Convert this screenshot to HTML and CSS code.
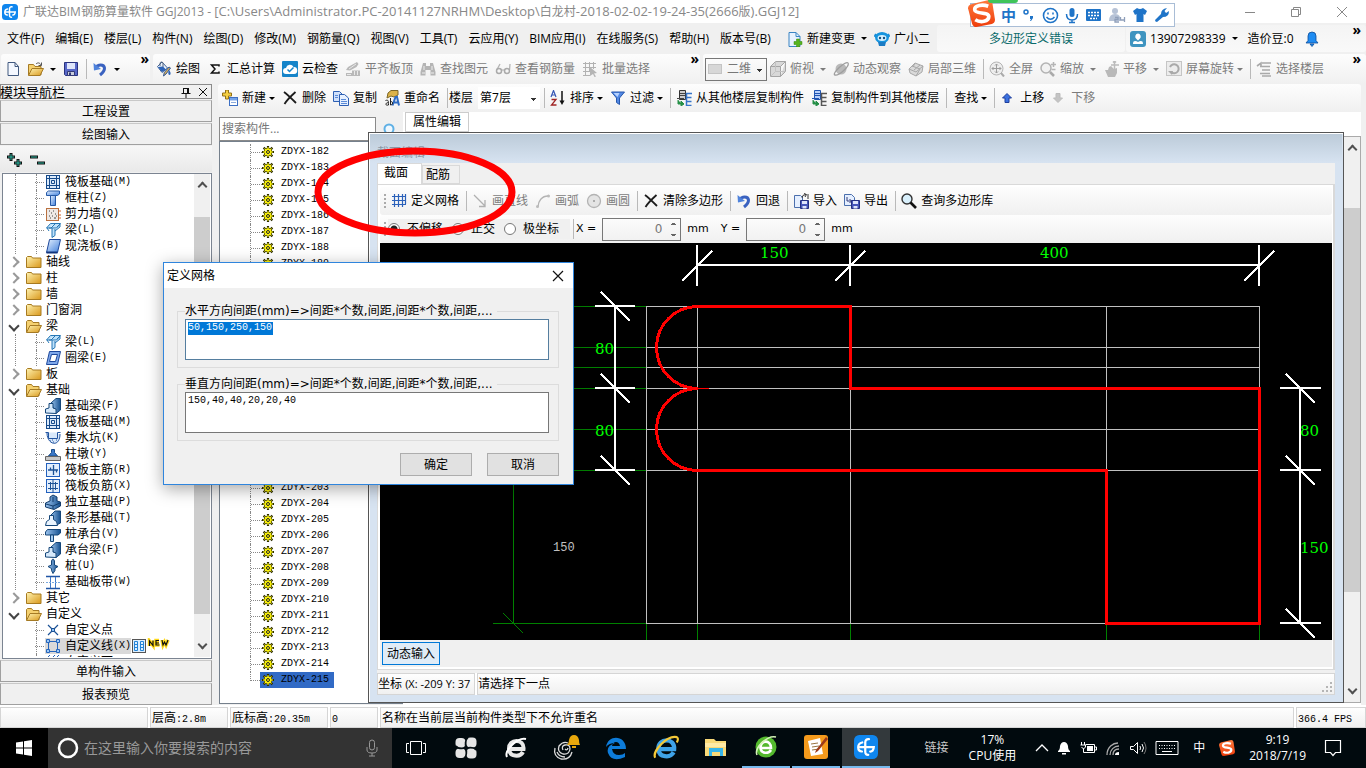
FILE: index.html
```html
<!DOCTYPE html>
<html lang="zh-CN">
<head>
<meta charset="utf-8">
<title>广联达BIM钢筋算量软件 GGJ2013</title>
<link rel="stylesheet" href="styles.css">
</head>
<body>
<svg class="defs" aria-hidden="true">
  <defs>
    <linearGradient id="gold" x1="0" y1="0" x2="1" y2="1"><stop offset="0" stop-color="#fff3b0"/><stop offset="1" stop-color="#d9981c"/></linearGradient>
    <linearGradient id="blue" x1="0" y1="0" x2="1" y2="1"><stop offset="0" stop-color="#e6f1ff"/><stop offset="1" stop-color="#3f7fdb"/></linearGradient>
    <linearGradient id="steel" x1="0" y1="0" x2="1" y2="0"><stop offset="0" stop-color="#9cc4ee"/><stop offset="1" stop-color="#15508f"/></linearGradient>
    <linearGradient id="sogou" x1="0" y1="0" x2="0" y2="1"><stop offset="0" stop-color="#ff7a3c"/><stop offset="1" stop-color="#ee3d0c"/></linearGradient>
  </defs>
  <symbol id="app" viewBox="0 0 16 16"><rect width="16" height="16" rx="3.500" fill="#0f86ee"/><path d="M10 2.800Q7.500 2.500 7.500 5v6.200Q7.500 13.300 9.500 13.200M4 8h9.200Q13 11 10.800 11M5.500 5Q2.800 5.500 2.800 8.200T5.300 11" fill="none" stroke="#fff" stroke-width="1.500" stroke-linecap="round"/></symbol>
  <symbol id="doc" viewBox="0 0 16 16"><path d="M3 1.500h7l3.500 4v9H3z" fill="#f4f8ff" stroke="#41597f"/><path d="M10 1.500v4h3.500" fill="none" stroke="#41597f"/></symbol>
  <symbol id="open" viewBox="0 0 16 16"><path d="M.500 14V3.500h5l1.500 2h6V14z" fill="#f5d170" stroke="#a57a24"/><path d="M.500 14.500 4 7.500h11.500L12 14.500z" fill="url(#gold)" stroke="#a57a24"/><path d="M8 3c2-2 4-1 5 1M13.500 1.500v3h-3" stroke="#555" fill="none"/></symbol>
  <symbol id="opened" viewBox="0 0 16 16"><path d="M.500 14V3.500l1-1h4l1.500 2h6V14z" fill="#f5d170" stroke="#a57a24"/><path d="M.500 14.500 4 7.500h11.500L12 14.500z" fill="url(#gold)" stroke="#a57a24"/></symbol>
  <symbol id="save" viewBox="0 0 16 16"><path d="M1.500 1.500h13v13h-12l-1-1z" fill="#5868c8" stroke="#29327e"/><path d="M4 2h8v6H4z" fill="#dfe6fa"/><path d="M4.500 10.500h7v4h-7z" fill="#c9cddb" stroke="#333a78"/><path d="M6 11.500h2v3H6z" fill="#333a78"/></symbol>
  <symbol id="undo" viewBox="0 0 16 16"><path d="M3 7c3-4 9-4 9.500 0 .200 3-2 5-4.500 7" fill="none" stroke="#3a62c0" stroke-width="3"/><path d="M1.500 2l.500 7.500L9 8z" fill="#4f83dc"/></symbol>
  <symbol id="paint" viewBox="0 0 16 16"><path d="M1.500 5.500 6 1l5.500 6L6 11.500z" fill="#e9f1fc" stroke="#3c5f95"/><path d="M2 6l5-.500 3 3-4 2.500z" fill="#2c63b8"/><path d="M4 5V2.500a1.500 1.500 0 0 1 3 0V6" fill="none" stroke="#53647d"/><path d="M14.500 7 10 13l-2.500 2 .800-3.500L13 6z" fill="#d8ad55" stroke="#315795"/><path d="M13 9c2 2 2 5 .500 5s-1.500-3-.500-5z" fill="#2c63b8"/></symbol>
  <symbol id="sigma" viewBox="0 0 16 16"><path d="M12 5.500V4H4.500L8 8l-3.500 4H12v-1.500" fill="none" stroke="#111" stroke-width="1.500"/></symbol>
  <symbol id="cloud" viewBox="0 0 16 16"><rect width="16" height="16" rx="1" fill="#1584c9"/><path d="M4 13a3 3 0 0 1 0-6 4 4 0 0 1 7.500-1A3.500 3.500 0 0 1 12 13z" fill="#fff"/><path d="m5.500 8.500 2 2 4-4" fill="none" stroke="#1584c9" stroke-width="1.500"/></symbol>
  <symbol id="align" viewBox="0 0 16 16"><path d="m1 9 2-3 9-5 1.500 2-2 3L5 9.500zM7 9.500h8V15H1v-3h6z" fill="#b9b9b9"/><path d="M9.500 10v4M12.500 10v4M2 13.500h4M4 8l7-5" stroke="#e9e9e9"/></symbol>
  <symbol id="binoc" viewBox="0 0 16 16"><path d="M3 2h3v3h4V2h3l2.500 9v3.500h-5V9h-5v5.500h-5V11z" fill="#b5b5b5"/><path d="M2 12h3M11 12h3M4 5v4M12 5v4" stroke="#eee"/></symbol>
  <symbol id="glasses" viewBox="0 0 16 16"><path d="M5 3 2 8.500M15 3l-.500 6" stroke="#b4b4b4" stroke-width="1.300" fill="none"/><circle cx="4" cy="10" r="2.500" fill="none" stroke="#aaa" stroke-width="1.500"/><circle cx="12" cy="10" r="2.500" fill="none" stroke="#aaa" stroke-width="1.500"/><path d="M6.500 9h3" stroke="#aaa"/></symbol>
  <symbol id="batch" viewBox="0 0 16 16"><path d="M1 2.500h13M1 6.500h13M1 10.500h6M1 14.500h7M3.500 1v14M7.500 1v10M11.500 1v7" stroke="#b2b2b2"/><path d="m8 6 7 6-3 .500 2 3-1.500.500-1.500-3-3 2z" fill="#b5b5b5"/></symbol>
  <symbol id="panel" viewBox="0 0 16 16"><rect x="1.500" y="3.500" width="13" height="9" fill="#d7d7d7" stroke="#c4c4c4"/></symbol>
  <symbol id="cube" viewBox="0 0 16 16"><path d="M.500 5.500h10v10h-10zM.500 5.500l5-5h10l-5 5M10.500 15.500l5-5V.500" fill="#d8d8d8" stroke="#a5a5a5"/><path d="M5.500.500v10h10M.500 15.500l5-5" fill="none" stroke="#c2c2c2"/></symbol>
  <symbol id="planet" viewBox="0 0 16 16"><circle cx="8" cy="8" r="5.500" fill="#bababa"/><path d="M2 14C-2 13 13-1 15 2s-9 13-13 12z" fill="none" stroke="#9e9e9e" stroke-width="1.300"/></symbol>
  <symbol id="part3d" viewBox="0 0 16 16"><path d="m1 8 6-6 8 3-1 6-6 4-6-3z" fill="#dadada" stroke="#a8a8a8"/><path d="m4 5 8 3-4 7M1 8l7 3 7-6M7 2l-2 4M12 4 6 9" fill="none" stroke="#a8a8a8"/></symbol>
  <symbol id="full" viewBox="0 0 16 16"><circle cx="7.500" cy="7.500" r="6.500" fill="#eee" stroke="#b5b5b5"/><path d="M7.500 3v9M3 7.500h9M6 4.500 7.500 3 9 4.500M6 10.500 7.500 12 9 10.500M4.500 6 3 7.500 4.500 9M10.500 6 12 7.500 10.500 9" fill="none" stroke="#9d9d9d"/><path d="m12 12 3 3.500" stroke="#aaa" stroke-width="2"/></symbol>
  <symbol id="zoomer" viewBox="0 0 16 16"><circle cx="6" cy="7" r="5" fill="#f2f2f2" stroke="#b3b3b3" stroke-width="1.500"/><path d="m10 11 4 4" stroke="#aaa" stroke-width="2.500"/><path d="M13.500 1v5M11 3.500h5M11.500 8.500h4" stroke="#b5b5b5" stroke-width="1.500"/></symbol>
  <symbol id="hand" viewBox="0 0 16 16"><path d="M2 9h3l1-3 2-1 3 3 3-1v5l-2 4H5z" fill="#b9b9b9"/><path d="M11.500 0v8M8 4h8M10 1.500 11.500 0 13 1.500" stroke="#bbb" stroke-width="1.500" fill="none"/></symbol>
  <symbol id="rotate" viewBox="0 0 16 16"><rect x=".500" y=".500" width="15" height="14" fill="#ececec" stroke="#c5c5c5"/><path d="M4 6a4.500 4.500 0 1 1 1 5" fill="none" stroke="#a9a9a9" stroke-width="2"/><path d="m2 10 5 0-1 4z" fill="#a9a9a9"/></symbol>
  <symbol id="floors" viewBox="0 0 16 16"><path d="M6 2h9M4 5.500h10M6 9h8M4 12.500h10M6 15h9M1 5l4-3v3" fill="none" stroke="#a9a9a9" stroke-width="1.600"/></symbol>
  <symbol id="newdoc" viewBox="0 0 16 16"><path d="M2 1.500h7l4 4v10H2z" fill="#e7f2ff" stroke="#3a84c3"/><path d="M9 1.500v4h4" fill="none" stroke="#3a84c3"/><path d="M9.500 8h3v2.500H15v3h-2.500V16h-3v-2.500H7v-3h2.500z" fill="#56b51f" stroke="#35870f" stroke-width=".500"/></symbol>
  <symbol id="robot" viewBox="0 0 16 16"><path d="M2 3 1 5l2 1M14 3l1 2-2 1" stroke="#188bd6" stroke-width="2"/><ellipse cx="8" cy="6.500" rx="7" ry="5.500" fill="#1694de"/><ellipse cx="8" cy="7" rx="4.500" ry="3" fill="#d8f2ff"/><circle cx="6" cy="7" r="1.200" fill="#17507f"/><circle cx="10" cy="7" r="1.200" fill="#17507f"/><path d="M4 11h8l-1 4H5z" fill="#1b7cc4"/></symbol>
  <symbol id="user" viewBox="0 0 16 16"><rect width="16" height="16" rx="3" fill="#3e94c0"/><path d="M8 2.500a3 3 0 0 1 2 5l-2 2-2-2a3 3 0 0 1 2-5zM3 13c0-4 3-3 5-2 2-1 5-2 5 2z" fill="#fff"/></symbol>
  <symbol id="bell" viewBox="0 0 16 16"><path d="M2 12 4 9.500V5a4 4 0 0 1 8 0v4.500l2 2.500zM6 13h4l-2 2.500z" fill="#1f8cf2" stroke="#0d4d99" stroke-width=".800"/></symbol>
  <symbol id="add" viewBox="0 0 16 16"><path d="M3.500 0h3v3h3v3h-3v3h-3V6h-3V3h3z" fill="#f4cf42" stroke="#927016"/><rect x="7.500" y="7.500" width="8" height="8" fill="#fff" stroke="#3c6fc3"/><path d="M8 8h7v2.500H8z" fill="#74a2e8"/><path d="M9 12.500h5" stroke="#8cabdc"/></symbol>
  <symbol id="cross" viewBox="0 0 16 16"><path d="M2 2c4 3 8 7 12 11M13.500 2C9 6 5 10 2.500 14" stroke="#1c1c1c" stroke-width="1.800" fill="none"/></symbol>
  <symbol id="copy" viewBox="0 0 16 16"><path d="M.500 1.500h6l3 3v7h-9z" fill="#cfe0fb" stroke="#2d5fb3"/><path d="M6.500 4.500h5l4 3.500v7.500h-9z" fill="#e6f0ff" stroke="#2d5fb3"/><path d="M8 9.500h5M8 11.500h6M8 13.500h6M2 5.500h3M2 7.500h3" stroke="#5b8bd8"/></symbol>
  <symbol id="rename" viewBox="0 0 16 16"><path d="m4 3 3-2.500h7V5l-4 2-3-1-4 2z" fill="#dcb34a" stroke="#7c6728"/><path d="m8.500 15.500 3-8.500h1.500l2 8.500M10 12.500h4.500" stroke="#2f6cc4" stroke-width="2" fill="none"/><path d="M1.500 10.500c3-1 3 .500 3 4.500-3 1-4-2 0-2.500M6.500 8v7c3 0 2.500-4 0-3.500" stroke="#222" fill="none"/></symbol>
  <symbol id="az" viewBox="0 0 16 16"><path d="m1 7 2.500-6.500L6 7M2 5h3" fill="none" stroke="#3656b4" stroke-width="1.200"/><path d="M1.500 9.500H6l-4.500 5.500H6.500" fill="none" stroke="#a02525" stroke-width="1.300"/><path d="M12 1v11" stroke="#111" stroke-width="1.500"/><path d="m9.500 10.500 5 0-2.500 4.500z" fill="#111"/></symbol>
  <symbol id="filter" viewBox="0 0 16 16"><path d="M1.500 2h13L9.500 8v6.500l-3-2V8z" fill="#5288e4" stroke="#2657ac"/><path d="M3.500 3h6L7.500 7z" fill="#b6d2ff"/></symbol>
  <symbol id="copyin" viewBox="0 0 16 16"><path d="M3.500.500h6v9h-6z" fill="#ccc" stroke="#333"/><path d="M4 3.500h5M4 5.500h5M1 8.500h7" stroke="#444"/><path d="M13.500 3.500h-3v12h5M10.500 7.500h5M10.500 11.500h5M13 3.500h3" stroke="#3675c9" stroke-width="1.500" fill="none"/><path d="M2 10v4h4M8 14l-3-3v5z" fill="#258f46" stroke="#258f46"/></symbol>
  <symbol id="copyout" viewBox="0 0 16 16"><path d="M3.500.500h6v9h-6z" fill="#b8d0fa" stroke="#2055b2"/><path d="M4 3.500h5M4 5.500h5M1 8.500h7" stroke="#2055b2"/><path d="M13.500 3.500h-3v12h5M10.500 7.500h5M10.500 11.500h5M13 3.500h3" stroke="#555" stroke-width="1.500" fill="none"/><path d="M2 10v4h4M8 14l-3-3v5z" fill="#258f46" stroke="#258f46"/></symbol>
  <symbol id="up" viewBox="0 0 16 16"><path d="m7 3.500 4.500 4.500H9v4.500H5V8H2.500z" fill="#3a70e0" stroke="#1f3f9c"/></symbol>
  <symbol id="down" viewBox="0 0 16 16"><path d="M7 12.500 2.500 8H5V3.500h4V8h2.500z" fill="#c4c4c4" stroke="#bbb"/></symbol>
  <symbol id="grid" viewBox="0 0 16 16"><path d="M3.500 1v13M7.500 1v13M11.500 1v13M14.500 1v10M1 3.500h14M1 7.500h14M1 11.500h14" stroke="#2b61ba" stroke-width="1.200"/></symbol>
  <symbol id="line" viewBox="0 0 16 16"><path d="m2 2 11 11M13 7v6.500H7" fill="none" stroke="#b0b0b0" stroke-width="1.300"/></symbol>
  <symbol id="arc" viewBox="0 0 16 16"><path d="M3 14C3 8 7 3 13 3" fill="none" stroke="#b3b3b3" stroke-width="1.300"/><circle cx="2.500" cy="13.500" r="1.500" fill="#bbb"/><circle cx="13.500" cy="3" r="1.500" fill="#bbb"/></symbol>
  <symbol id="circle" viewBox="0 0 16 16"><circle cx="8" cy="8" r="6.500" fill="#e4e4e4" stroke="#b3b3b3" stroke-width="1.300"/><path d="M8 7v2M7 8h2" stroke="#999"/></symbol>
  <symbol id="import" viewBox="0 0 16 16"><path d="M1.500 2.500h6l2 2v10h-8z" fill="#e5efff" stroke="#4b6fad"/><path d="M7.500 7.500h8v8h-8z" fill="#4656b8" stroke="#252f80"/><path d="M9 8h5v3H9zM9.500 13h4v2.500h-4z" fill="#dee4fb"/><path d="M9 5Q9 1.500 13 1.500M11 .500l2.500 1L12 4M15 1v5" stroke="#333" fill="none"/></symbol>
  <symbol id="export" viewBox="0 0 16 16"><path d="M.500 1.500h7l3 3v8h-10z" fill="#e5efff" stroke="#4b6fad"/><path d="M3 4v4h4M5.500 6 7.500 8l-2 2" stroke="#333a78" fill="none"/><path d="M7.500 7.500h8v8h-8z" fill="#4656b8" stroke="#252f80"/><path d="M9 8h5v3H9zM9.500 13h4v2.500h-4z" fill="#dee4fb"/></symbol>
  <symbol id="lens" viewBox="0 0 16 16"><circle cx="6" cy="6" r="5" fill="#d9f0fc" stroke="#333" stroke-width="1.400"/><path d="m9.500 9.500 5.500 5.500" stroke="#111" stroke-width="2.600"/></symbol>
  <symbol id="folder" viewBox="0 0 16 16"><path d="M.500 13.500v-10l1-1h4l1 1.500h8.500v9.500z" fill="url(#gold)" stroke="#a77a20"/></symbol>
  <symbol id="gear" viewBox="0 0 12 12"><path d="M6 0v12M0 6h12M1.600 1.600l8.800 8.800M10.400 1.600l-8.800 8.800" stroke="#2c2c00" stroke-width="2.200"/><circle cx="6" cy="6" r="4" fill="#f5e800" stroke="#55500a" stroke-width=".800"/><path d="M6 1v10M1 6h10M2.500 2.500l7 7M9.500 2.500l-7 7" stroke="#ffff20" stroke-width=".900"/><circle cx="6" cy="6" r="1.500" fill="#fff200" stroke="#222"/></symbol>
  <symbol id="raft" viewBox="0 0 16 16"><rect x="1.500" y="1.500" width="13" height="13" fill="#dcebfb" stroke="#164a8a"/><path d="M4.500 1v14M11.500 1v14M1 4.500h14M1 11.500h14M6.500 6.500h3v3h-3z" stroke="#164a8a" fill="none"/></symbol>
  <symbol id="column" viewBox="0 0 16 16"><path d="m1.500 2.500 2-1.500h11v3l-2 1.500h-11z" fill="url(#blue)" stroke="#2558a5"/><path d="M5.500 5.500h5v10h-5z" fill="url(#blue)" stroke="#2558a5"/></symbol>
  <symbol id="wall" viewBox="0 0 16 16"><rect x="1.500" y="2.500" width="12" height="12" fill="#efe9e5" stroke="#b9703f"/><path d="M4 5h1M8 5h1M6 7h1M10 8h1M4 10h1M7 10h1M5 12h1M9 12h2M11 10h1" stroke="#444"/><path d="M13 5h3M13 9h3M13 12h3" stroke="#d0642a"/></symbol>
  <symbol id="beam" viewBox="0 0 16 16"><path d="m1.500 6 4-4.500h10l-4 4.500zM4 6h2l4-4M7 6v9.500l3-2V7M2 6l2 3M12 5l3-3v3l-5 4" fill="#bfe2fb" stroke="#2677b5"/></symbol>
  <symbol id="slab" viewBox="0 0 16 16"><path d="M4.500 1.500h11l-3 13h-11z" fill="url(#blue)" stroke="#1c479b"/><path d="M1.500 14.500h11" stroke="#12357c" stroke-width="2"/></symbol>
  <symbol id="ring" viewBox="0 0 16 16"><path d="M4.500 1.500h11l-3 13h-11z" fill="#7fa8ea" stroke="#1c479b"/><path d="M6.500 4.500h6l-2 7h-6z" fill="#fff" stroke="#1c479b"/></symbol>
  <symbol id="fbeam" viewBox="0 0 16 16"><path d="M6 5 11 .500h4.500V12L11 15.500z" fill="url(#steel)" stroke="#154679"/><path d="M.500 15v-4L4 10V5.500h4V10l3 1v4.500z" fill="#d6e9fb" stroke="#154679"/></symbol>
  <symbol id="pit" viewBox="0 0 16 16"><path d="M.500 2.500h3v6h9v-6h3M2 3c0 12 13 15 13 1" fill="#d8e8fa" stroke="#2255a1"/><path d="M5 11h1M8 12h1M11 10h1M7 10h1" stroke="#2255a1"/></symbol>
  <symbol id="pier" viewBox="0 0 16 16"><path d="M6.500 3.500h3v3l3 3.500h-9l3-3.500z" fill="#3a78c8" stroke="#174a88"/><path d="M.500 10.500h15v4H.500z" fill="#c8c8c8" stroke="#666"/></symbol>
  <symbol id="rebar1" viewBox="0 0 16 16"><rect x="1.500" y="1.500" width="13" height="13" fill="#e3effd" stroke="#2260bd"/><path d="M8.500 3v10M3 8h10M5.500 5.500V8M11.500 8v2.500" stroke="#1c5295" stroke-width="1.300"/></symbol>
  <symbol id="rebar2" viewBox="0 0 16 16"><rect x="1.500" y="1.500" width="13" height="13" fill="#e3effd" stroke="#2260bd"/><path d="M8 1v14M3 5.500h10M3 10.500h10M5.500 4v8M10.500 4v8" stroke="#1c5295"/></symbol>
  <symbol id="footing" viewBox="0 0 16 16"><path d="M.500 9 5 7V3l3-2 4 2v4l3.500 1v4L9 15.500.500 13z" fill="url(#steel)" stroke="#143d6c"/><path d="m1 10 7 2 7-3M8 12v3M8 3v5" fill="none" stroke="#143d6c"/></symbol>
  <symbol id="strip" viewBox="0 0 16 16"><path d="m5 6 5-5h5.500v12l-4 2z" fill="url(#steel)" stroke="#154679"/><path d="m.500 15.500 1-4 3-2v-4h4v4l3 2 1 4z" fill="#eaf4fe" stroke="#154679"/></symbol>
  <symbol id="cap" viewBox="0 0 16 16"><path d="m.500 6 2-2.500h13V7L13 9H.500z" fill="url(#steel)" stroke="#154679"/><path d="M5.500 9h3v6.500h-3z" fill="#a8cef2" stroke="#154679"/></symbol>
  <symbol id="pile" viewBox="0 0 16 16"><path d="M6.500 3q1.500-4 3 0v4l3.500 1.500-3 2v2L8 15.500 6.500 12.500v-2L3 8.500 6.500 7z" fill="url(#steel)" stroke="#154679"/></symbol>
  <symbol id="band" viewBox="0 0 16 16"><path d="M1 2.500h14M1 14.500h14" stroke="#2055a5" stroke-width="1.500"/><path d="M5.500 3v11M10.500 3v11" stroke="#3d78c9"/><path d="M1 8.500h14" stroke="#7aa9e0" stroke-dasharray="2 1"/></symbol>
  <symbol id="point" viewBox="0 0 16 16"><path d="m3 3 10 10M13 3 3 13" stroke="#1c5295" stroke-width="1.200"/><rect x="6.500" y="6.500" width="3" height="3" fill="#8ec1f2" stroke="#1c5295"/></symbol>
  <symbol id="poly" viewBox="0 0 16 16"><path d="M3 3.500h10M3 13.500h10M3.500 3v10M12.500 3v10" stroke="#2565bd"/><path d="M1.500 1.500h3v3h-3zM11.500 1.500h3v3h-3zM1.500 11.500h3v3h-3zM11.500 11.500h3v3h-3z" fill="#9ecaf8" stroke="#2565bd"/></symbol>
  <symbol id="hatch" viewBox="0 0 16 16"><path d="m1 5 4-4M4 7l6-6M8 7l6-6M12 7l3-3" stroke="#2565bd"/></symbol>
  <symbol id="s-logo" viewBox="0 0 26 26"><path d="m3 4 17-4q3 0 3.500 3L26 19q0 3-3 4L8 26q-3 0-4-3L0 8Q0 5 3 4z" fill="url(#sogou)"/><path d="M19.500 6C14 4 6 5 6.500 9.500S20 11 20 16c0 5-8 6-13 3" fill="none" stroke="#fff" stroke-width="3.600"/></symbol>
  <symbol id="win-e" viewBox="0 0 24 24"><path d="M5 13h14.500c1-11-15-10.500-14.500 0 .500 8 11 8.500 14 3" fill="none" stroke="currentColor" stroke-width="4"/></symbol>
</svg>

<header class="title">
  <svg class="ic"><use href="#app"/></svg>
  <h1>广联达BIM钢筋算量软件 GGJ2013 - <span>[C:\Users\Administrator.PC-20141127NRHM\Desktop\</span>白龙村<span>-2018-02-02-19-24-35(2666</span>版<span>).GGJ12]</span></h1>
  <div class="winbtns">
    <button aria-label="最小化"><svg width="12" height="12"><path d="M1 6.500h10" stroke="#888"/></svg></button>
    <button aria-label="还原"><svg width="12" height="12"><path d="M1.500 3.500h7v7h-7zM3.500 3v-1.500h7v7H9" fill="none" stroke="#888"/></svg></button>
    <button aria-label="关闭"><svg width="12" height="12"><path d="m1 1 10 10M11 1 1 11" stroke="#888"/></svg></button>
  </div>
</header>

<nav class="menu">
  <div class="menu-items">
    <button>文件(F)</button><button>编辑(E)</button><button>楼层(L)</button><button>构件(N)</button><button>绘图(D)</button><button>修改(M)</button><button>钢筋量(Q)</button><button>视图(V)</button><button>工具(T)</button><button>云应用(Y)</button><button>BIM应用(I)</button><button>在线服务(S)</button><button>帮助(H)</button><button>版本号(B)</button>
  </div>
  <button class="tool"><svg class="ic"><use href="#newdoc"/></svg>新建变更<i class="arr"></i></button>
  <button class="tool"><svg class="ic"><use href="#robot"/></svg>广小二</button>
  <div class="hint">多边形定义错误</div>
  <div class="account">
    <button class="tool"><svg class="ic"><use href="#user"/></svg>13907298339<i class="arr"></i></button>
    <span>造价豆:0</span><svg class="ic"><use href="#bell"/></svg>
    <b class="more">»</b>
  </div>
</nav>

<div class="bars">
  <div class="bar file-bar">
    <button class="tool" aria-label="新建"><svg class="ic"><use href="#doc"/></svg></button>
    <button class="tool" aria-label="打开"><svg class="ic"><use href="#open"/></svg><i class="arr"></i></button>
    <button class="tool" aria-label="保存"><svg class="ic"><use href="#save"/></svg></button>
    <i class="sep"></i>
    <button class="tool" aria-label="撤销"><svg class="ic"><use href="#undo"/></svg><i class="arr"></i></button>
    <b class="more">»</b>
  </div>
  <div class="bar draw-bar">
    <button class="tool"><svg class="ic"><use href="#paint"/></svg>绘图</button>
    <button class="tool"><svg class="ic"><use href="#sigma"/></svg>汇总计算</button>
    <button class="tool"><svg class="ic"><use href="#cloud"/></svg>云检查</button>
    <button class="tool" disabled><svg class="ic"><use href="#align"/></svg>平齐板顶</button>
    <button class="tool" disabled><svg class="ic"><use href="#binoc"/></svg>查找图元</button>
    <button class="tool" disabled><svg class="ic"><use href="#glasses"/></svg>查看钢筋量</button>
    <button class="tool" disabled><svg class="ic"><use href="#batch"/></svg>批量选择</button>
    <b class="more">»</b>
  </div>
  <div class="bar view-bar">
    <label class="dim-pick"><svg class="ic"><use href="#panel"/></svg><select aria-label="视图维度" disabled><option>二维</option></select></label>
    <button class="tool" disabled><svg class="ic"><use href="#cube"/></svg>俯视<i class="arr"></i></button>
    <button class="tool" disabled><svg class="ic"><use href="#planet"/></svg>动态观察</button>
    <button class="tool" disabled><svg class="ic"><use href="#part3d"/></svg>局部三维</button>
    <i class="sep"></i>
    <button class="tool" disabled><svg class="ic"><use href="#full"/></svg>全屏</button>
    <button class="tool" disabled><svg class="ic"><use href="#zoomer"/></svg>缩放<i class="arr"></i></button>
    <button class="tool" disabled><svg class="ic"><use href="#hand"/></svg>平移<i class="arr"></i></button>
    <button class="tool" disabled><svg class="ic"><use href="#rotate"/></svg>屏幕旋转<i class="arr near"></i></button>
    <i class="sep"></i>
    <button class="tool" disabled><svg class="ic"><use href="#floors"/></svg>选择楼层</button>
    <b class="more">»</b>
  </div>
</div>

<main class="work">
  <aside class="nav">
    <div class="nav-head"><span>模块导航栏</span>
      <svg width="28" height="12"><path d="M3.500 2v5M8.500 2v5M7.500 2v5M3 2.500h6M1.500 7.500h9M6 8v4" stroke="#111"/><path d="m19 2 8 8M27 2l-8 8" stroke="#111"/></svg>
    </div>
    <button class="slat">工程设置</button>
    <button class="slat">绘图输入</button>
    <div class="nav-tools">
      <svg width="40" height="18"><path d="M5 1v8M1 5h8M12 7v8M8 11h8" stroke="#111" stroke-width="3"/><path d="M5 2v6M2 5h6M12 8v6M9 11h6" stroke="#2bb5a0" stroke-width="1"/><path d="M24 5h8M31 11h8" stroke="#111" stroke-width="3"/><path d="M25 5h6M32 11h6" stroke="#2bb5a0"/></svg>
    </div>
    <div class="tree-box">
      <ul class="tree">
        <li><ul>
          <li class="leaf"><svg class="ic"><use href="#raft"/></svg>筏板基础<span class="half">(M)</span></li>
          <li class="leaf"><svg class="ic"><use href="#column"/></svg>框柱<span class="half">(Z)</span></li>
          <li class="leaf"><svg class="ic"><use href="#wall"/></svg>剪力墙<span class="half">(Q)</span></li>
          <li class="leaf"><svg class="ic"><use href="#beam"/></svg>梁<span class="half">(L)</span></li>
          <li class="leaf"><svg class="ic"><use href="#slab"/></svg>现浇板<span class="half">(B)</span></li>
        </ul></li>
        <li class="node"><i class="chev"></i><svg class="ic"><use href="#folder"/></svg>轴线</li>
        <li class="node"><i class="chev"></i><svg class="ic"><use href="#folder"/></svg>柱</li>
        <li class="node"><i class="chev"></i><svg class="ic"><use href="#folder"/></svg>墙</li>
        <li class="node"><i class="chev"></i><svg class="ic"><use href="#folder"/></svg>门窗洞</li>
        <li><div class="node"><i class="chev open"></i><svg class="ic"><use href="#opened"/></svg>梁</div><ul>
          <li class="leaf"><svg class="ic"><use href="#beam"/></svg>梁<span class="half">(L)</span></li>
          <li class="leaf"><svg class="ic"><use href="#ring"/></svg>圈梁<span class="half">(E)</span></li>
        </ul></li>
        <li class="node"><i class="chev"></i><svg class="ic"><use href="#folder"/></svg>板</li>
        <li><div class="node"><i class="chev open"></i><svg class="ic"><use href="#opened"/></svg>基础</div><ul>
          <li class="leaf"><svg class="ic"><use href="#fbeam"/></svg>基础梁<span class="half">(F)</span></li>
          <li class="leaf"><svg class="ic"><use href="#raft"/></svg>筏板基础<span class="half">(M)</span></li>
          <li class="leaf"><svg class="ic"><use href="#pit"/></svg>集水坑<span class="half">(K)</span></li>
          <li class="leaf"><svg class="ic"><use href="#pier"/></svg>柱墩<span class="half">(Y)</span></li>
          <li class="leaf"><svg class="ic"><use href="#rebar1"/></svg>筏板主筋<span class="half">(R)</span></li>
          <li class="leaf"><svg class="ic"><use href="#rebar2"/></svg>筏板负筋<span class="half">(X)</span></li>
          <li class="leaf"><svg class="ic"><use href="#footing"/></svg>独立基础<span class="half">(P)</span></li>
          <li class="leaf"><svg class="ic"><use href="#strip"/></svg>条形基础<span class="half">(T)</span></li>
          <li class="leaf"><svg class="ic"><use href="#cap"/></svg>桩承台<span class="half">(V)</span></li>
          <li class="leaf"><svg class="ic"><use href="#fbeam"/></svg>承台梁<span class="half">(F)</span></li>
          <li class="leaf"><svg class="ic"><use href="#pile"/></svg>桩<span class="half">(U)</span></li>
          <li class="leaf"><svg class="ic"><use href="#band"/></svg>基础板带<span class="half">(W)</span></li>
        </ul></li>
        <li class="node"><i class="chev"></i><svg class="ic"><use href="#folder"/></svg>其它</li>
        <li class="last"><div class="node"><i class="chev open"></i><svg class="ic"><use href="#opened"/></svg>自定义</div><ul>
          <li class="leaf"><svg class="ic"><use href="#point"/></svg>自定义点</li>
          <li class="leaf"><span class="picked"><svg class="ic"><use href="#poly"/></svg>自定义线<span class="half">(X)</span></span><svg width="39" height="16" aria-label="NEW"><rect x="1.500" y="1.500" width="13" height="13" fill="#dcefff" stroke="#555"/><path d="M3.500 3.500h3v9h-3zM9.500 3.500h3v9h-3zM3 6.500h4M3 9.500h4M9 6.500h4M9 9.500h4" fill="none" stroke="#2484d8"/><path d="M18.500 8V3l3.500 4.500V2.500M28 2.500h-3v4.500h3.500M25 5h3M31 2l1 5 1.500-3 1.500 3 2-5" fill="none" stroke="#ffd91a" stroke-width="3.500"/><path d="M18.500 8V3l3.500 4.500V2.500M28 2.500h-3v4.500h3.500M25 5h3M31 2l1 5 1.500-3 1.500 3 2-5" fill="none" stroke="#111" stroke-width="1.200"/></svg></li>
          <li class="leaf"><svg class="ic"><use href="#hatch"/></svg>自定义面</li>
        </ul></li>
      </ul>
      <div class="scroll nav-scroll"><i class="tip"></i><i class="thumb"></i><i class="tip dn"></i></div>
    </div>
    <button class="slat">单构件输入</button>
    <button class="slat">报表预览</button>
  </aside>

  <section class="desk">
    <div class="bar object-bar">
      <button class="tool"><svg class="ic"><use href="#add"/></svg>新建<i class="arr near"></i></button>
      <button class="tool"><svg class="ic"><use href="#cross"/></svg>删除</button>
      <button class="tool"><svg class="ic"><use href="#copy"/></svg>复制</button>
      <button class="tool"><svg class="ic"><use href="#rename"/></svg>重命名</button>
      <i class="sep"></i>
      <label class="floor">楼层<select><option>第7层</option></select></label>
      <i class="sep"></i>
      <button class="tool"><svg class="ic"><use href="#az"/></svg>排序<i class="arr near"></i></button>
      <button class="tool"><svg class="ic"><use href="#filter"/></svg>过滤<i class="arr near"></i></button>
      <i class="sep"></i>
      <button class="tool"><svg class="ic"><use href="#copyin"/></svg>从其他楼层复制构件</button>
      <button class="tool"><svg class="ic"><use href="#copyout"/></svg>复制构件到其他楼层</button>
      <i class="sep"></i>
      <button class="tool plain">查找<i class="arr near"></i></button>
      <i class="sep"></i>
      <button class="tool"><svg class="ic"><use href="#up"/></svg>上移</button>
      <button class="tool" disabled><svg class="ic"><use href="#down"/></svg>下移</button>
    </div>
    <div class="split">
      <div class="parts">
        <div class="search"><input type="text" placeholder="搜索构件..." aria-label="搜索构件"><svg width="14" height="16"><circle cx="7" cy="8" r="4.500" fill="#eef8ff" stroke="#5fb0e5" stroke-width="2"/></svg></div>
        <ul class="list">
          <li><svg><use href="#gear"/></svg><span>ZDYX-182</span></li><li><svg><use href="#gear"/></svg><span>ZDYX-183</span></li><li><svg><use href="#gear"/></svg><span>ZDYX-184</span></li><li><svg><use href="#gear"/></svg><span>ZDYX-185</span></li>
          <li><svg><use href="#gear"/></svg><span>ZDYX-186</span></li><li><svg><use href="#gear"/></svg><span>ZDYX-187</span></li><li><svg><use href="#gear"/></svg><span>ZDYX-188</span></li><li><svg><use href="#gear"/></svg><span>ZDYX-189</span></li>
          <li><svg><use href="#gear"/></svg><span>ZDYX-190</span></li><li><svg><use href="#gear"/></svg><span>ZDYX-191</span></li><li><svg><use href="#gear"/></svg><span>ZDYX-192</span></li><li><svg><use href="#gear"/></svg><span>ZDYX-193</span></li>
          <li><svg><use href="#gear"/></svg><span>ZDYX-194</span></li><li><svg><use href="#gear"/></svg><span>ZDYX-195</span></li><li><svg><use href="#gear"/></svg><span>ZDYX-196</span></li><li><svg><use href="#gear"/></svg><span>ZDYX-197</span></li>
          <li><svg><use href="#gear"/></svg><span>ZDYX-198</span></li><li><svg><use href="#gear"/></svg><span>ZDYX-199</span></li><li><svg><use href="#gear"/></svg><span>ZDYX-200</span></li><li><svg><use href="#gear"/></svg><span>ZDYX-201</span></li>
          <li><svg><use href="#gear"/></svg><span>ZDYX-202</span></li><li><svg><use href="#gear"/></svg><span>ZDYX-203</span></li><li><svg><use href="#gear"/></svg><span>ZDYX-204</span></li><li><svg><use href="#gear"/></svg><span>ZDYX-205</span></li>
          <li><svg><use href="#gear"/></svg><span>ZDYX-206</span></li><li><svg><use href="#gear"/></svg><span>ZDYX-207</span></li><li><svg><use href="#gear"/></svg><span>ZDYX-208</span></li><li><svg><use href="#gear"/></svg><span>ZDYX-209</span></li>
          <li><svg><use href="#gear"/></svg><span>ZDYX-210</span></li><li><svg><use href="#gear"/></svg><span>ZDYX-211</span></li><li><svg><use href="#gear"/></svg><span>ZDYX-212</span></li><li><svg><use href="#gear"/></svg><span>ZDYX-213</span></li>
          <li><svg><use href="#gear"/></svg><span>ZDYX-214</span></li><li class="on"><svg><use href="#gear"/></svg><span>ZDYX-215</span></li>
        </ul>
      </div>
      <div class="props">
        <button class="prop-tab">属性编辑</button>
        <div class="prop-body"><div class="scroll"><i class="tip"></i><i class="thumb"></i><i class="tip dn"></i></div></div>
      </div>
    </div>
  </section>

  <section class="editor" aria-label="截面编辑">
    <div class="editor-title">截面编辑</div>
    <div class="editor-main">
      <div class="tabs"><button class="cur">截面</button><button>配筋</button></div>
      <div class="page">
        <div class="bar inner">
          <i class="grip"></i>
          <button class="tool"><svg class="ic"><use href="#grid"/></svg>定义网格</button>
          <i class="sep"></i>
          <button class="tool" disabled><svg class="ic"><use href="#line"/></svg>画直线</button>
          <button class="tool" disabled><svg class="ic"><use href="#arc"/></svg>画弧</button>
          <button class="tool" disabled><svg class="ic"><use href="#circle"/></svg>画圆</button>
          <i class="sep"></i>
          <button class="tool"><svg class="ic"><use href="#cross"/></svg>清除多边形</button>
          <i class="sep"></i>
          <button class="tool"><svg class="ic"><use href="#undo"/></svg>回退</button>
          <i class="sep"></i>
          <button class="tool"><svg class="ic"><use href="#import"/></svg>导入</button>
          <button class="tool"><svg class="ic"><use href="#export"/></svg>导出</button>
          <i class="sep"></i>
          <button class="tool"><svg class="ic"><use href="#lens"/></svg>查询多边形库</button>
        </div>
        <div class="bar inner offset">
          <i class="grip"></i>
          <div class="modes">
            <label><input type="radio" name="mode" checked>不偏移</label>
            <label><input type="radio" name="mode">正交</label>
            <label><input type="radio" name="mode">极坐标</label>
          </div>
          <i class="sep"></i>
          <label class="num">X = <span class="spin"><input type="text" value="0" disabled><i></i></span> mm</label>
          <label class="num">Y = <span class="spin"><input type="text" value="0" disabled><i></i></span> mm</label>
        </div>
        <div class="canvas">
          <svg viewBox="380 243 952 397" preserveAspectRatio="xMinYMin meet" shape-rendering="crispEdges">
            <path class="aux" d="M513.500 300V623M493 623.500H646M503 613l20 20M570 306.500h76M570 347.500h76M570 367.500h76M570 388.500h76M570 429.500h76M570 470.500h76M646.500 623v17M697.500 623v17M850.500 623v17M1106.500 623v17M1259.500 623v17"/>
            <path class="mesh" d="M646 306.500h613M646 347.500h613M646 367.500h613M646 388.500h613M646 429.500h613M646 470.500h613M646 623.500h613M646.500 306v318M697.500 306v318M850.500 306v318M1106.500 306v318M1259.500 306v318"/>
            <path class="dimline" d="M697 265h562M697 245v41M850 245v41M1259 245v41M682 281l30-30M835 281l30-30M1244 281l30-30M615 306v164M595 306h40M595 388h40M595 470h40M601 292l29 29M601 374l29 29M601 456l29 29M1300 388v235M1280 388h41M1280 470h41M1280 623h41M1286 374l29 29M1286 456l29 29M1286 609l29 29"/>
            <path class="shape" d="M697.500 306.500h153v82h409v235h-153v-153h-409a41 41 0 0 1 0-82a41 41 0 0 1 0-82z"/>
            <path d="M697 388.500h12" stroke="red"/>
            <g class="dimtext"><text x="760" y="258">150</text><text x="1040" y="258">400</text><text x="595" y="354">80</text><text x="595" y="436">80</text><text x="1300" y="436">80</text><text x="1300" y="553">150</text></g>
            <text class="small" x="553" y="551">150</text>
          </svg>
        </div>
        <div class="page-foot"><button>动态输入</button></div>
      </div>
      <div class="editor-status"><div class="xy">坐标 <span>(X: -209 Y: 37</span></div><div class="msg">请选择下一点</div><svg width="12" height="12"><path d="M9 1h2M5 5h2M9 5h2M1 9h2M5 9h2M9 9h2" stroke="#b5b5b5" stroke-width="2"/></svg></div>
    </div>
  </section>
</main>

<footer class="status">
  <span class="s1"></span><span class="s2">层高<span class="half">:2.8m</span></span><span class="s3">底标高<span class="half">:20.35m</span></span><span class="s4"><span class="half">0</span></span><span class="s5">名称在当前层当前构件类型下不允许重名</span><span class="s6"><span class="half">366.4 FPS</span></span>
</footer>

<footer class="taskbar">
  <button class="start" aria-label="开始"><svg width="16" height="16"><path d="M0 2.500 7 1.500V7.500H0zM8 1.300 16 0v7.500H8zM0 8.500h7v6L0 13.500zM8 8.500h8V16l-8-1.300z" fill="#fff"/></svg></button>
  <label class="cortana"><svg width="22" height="22"><circle cx="11" cy="11" r="9" fill="none" stroke="#fff" stroke-width="2.500"/></svg><input type="text" placeholder="在这里输入你要搜索的内容" aria-label="搜索"><svg width="12" height="18"><rect x="3.500" y="1" width="5" height="10" rx="2.500" fill="none" stroke="#999"/><path d="M1 8v3q0 3 5 3t5-3V8M6 14v3M3 17h6" fill="none" stroke="#999"/></svg></label>
  <div class="apps">
    <button aria-label="任务视图"><svg width="22" height="18"><path d="M5.500 2.500h11v13h-11zM4 4.500H1.500v9H4M18 4.500h2.500v9H18" fill="none" stroke="#fff"/></svg></button>
    <button aria-label="应用"><svg width="24" height="24" viewBox="0 0 24 24"><rect x="1.500" y="2" width="10" height="9.500" rx="4" fill="#e6e6e6"/><rect x="12.500" y="1.500" width="10" height="10" rx="4" fill="#e6e6e6"/><rect x="1.500" y="12.500" width="10" height="9.500" rx="4" fill="#e6e6e6"/><rect x="12.500" y="12.500" width="10" height="10" rx="4" fill="#e6e6e6"/><path d="M12 12Q5 14 2 10M12 12Q10 5 14 2M12 12q7-2 10 2M12 12q2 7-2 10" stroke="#061014" stroke-width="1.300" fill="none"/></svg></button>
    <button aria-label="浏览器" class="pale"><svg width="24" height="24"><use href="#win-e"/><path d="M3 21C0 15 13 1 22 3" fill="none" stroke="#fff" stroke-width="2"/></svg></button>
    <button aria-label="助手"><svg width="28" height="28" viewBox="0 0 28 28"><path d="M11 16q-2-4 2-5 5-1 5 4-1 6-7 5-6-2-4-8 4-5 9-3M13 15q2 2 3-1M3 14q-2 8 6 11 9 1 11-7M5 18q2 5 8 5" fill="none" stroke="#ddd" stroke-width="1.300"/><path d="M15 11q2-2 2-5 1-5 5-5t5 5q0 3 1 5zM20 12h4v2h-4z" fill="#e9a80c"/></svg></button>
    <button aria-label="Edge" class="edge"><svg width="24" height="24" viewBox="0 0 24 24"><path d="M2 11C4-2 22-1 22 13H8q1 6 7 6 4 0 6-2v4Q8 27 4 17 2 10 11 7q-6 0-9 4zm6-1h8q-1-4-4-4-3 0-4 4z" fill="#0d7cda"/></svg></button>
    <button aria-label="IE" class="ie"><svg width="26" height="26" viewBox="0 0 24 24"><use href="#win-e"/><path d="M2 21C-1 15 13 0 22 2q2 1 0 5" fill="none" stroke="#f4c838" stroke-width="2"/></svg></button>
    <button aria-label="文件资源管理器"><svg width="24" height="22"><path d="M1 2h9l2 2h10v15H1z" fill="#f9d978"/><path d="M5 19v-8h14v8h-3v-4H8v4z" fill="#37b5ea"/><path d="M1 6h21v4H1z" fill="#ffeaa5"/></svg></button>
    <button aria-label="360浏览器" class="run"><svg width="24" height="24" viewBox="0 0 24 24"><circle cx="12" cy="12" r="10.500" fill="#54b92e"/><path d="M7 13h10c0-9-11-8-10.500 0 .500 6 8 6 10.500 2" fill="none" stroke="#fff" stroke-width="2.600"/><path d="M3 20C0 13 13 0 22 2" fill="none" stroke="#d5f3b8" stroke-width="1.600"/></svg></button>
    <button aria-label="记事" class="run"><svg width="26" height="26"><rect x="1" y="1" width="24" height="24" rx="3" fill="#f59b1c"/><path d="m5 7 12-3 3 16-12 2z" fill="#fff"/><path d="m8 10 7-1M9 13l7-1M9 16l7-1" stroke="#997643"/><path d="M23 3 13 16l-1 3 3-2L25 5z" fill="#9e3b18"/></svg></button>
    <button aria-label="广联达" class="run now"><svg width="24" height="24"><use href="#app"/></svg></button>
  </div>
  <div class="tray">
    <span class="links">链接</span>
    <span class="cpu">17%<br>CPU使用</span>
    <svg width="14" height="10"><path d="m1 8 6-6 6 6" fill="none" stroke="#fff" stroke-width="1.300"/></svg>
    <svg width="14" height="14"><path d="M1 10q2-1 2-5Q4 1 7 1t4 4q0 4 2 5v1H1zM5 12h4v1.500H5z" fill="#fff"/></svg>
    <svg width="18" height="14"><path d="M6.500 3.500h9v8h-11v-4M15.500 6h2v3h-2M2.500 1v3M5.500 1v3M1.500 4h5v2l-2 2-2-2" fill="none" stroke="#fff"/><path d="M8 5h6v5H8z" fill="#fff"/></svg>
    <svg width="16" height="15"><path d="M2 14C2 6 8 2 13 2M5 14c0-5 4-9 9-9M8 14c0-4 2-6 6-6" fill="none" stroke="#aaa" stroke-width="1.300"/><path d="M10 14q0-3 4-3v3z" fill="#fff"/></svg>
    <svg width="18" height="14"><path d="M1.500 5.500h3l4-4v11l-4-4h-3z" fill="none" stroke="#fff"/><path d="M11 5q1 2 0 4M13 3q3 4 0 8" fill="none" stroke="#fff"/><path d="M15 1q4 6 0 12" fill="none" stroke="#777"/></svg>
    <svg width="24" height="14"><path d="M1 .500h22v13H1z" fill="none" stroke="#fff"/><path d="M4 4.500h17M4 7.500h17" stroke="#fff" stroke-dasharray="1 1.500"/><path d="M7 10.500h10" stroke="#fff"/></svg>
    <span class="ime">中</span>
    <svg width="16" height="16" viewBox="0 0 26 26"><use href="#s-logo"/></svg>
    <span class="clock">9:19<br>2018/7/19</span>
    <svg class="note" width="18" height="18"><path d="M1.500 1.500h15v12h-5l-2.500 3-2.500-3h-5z" fill="none" stroke="#fff" stroke-width="1.200"/></svg>
  </div>
</footer>

<section class="dialog" role="dialog" aria-label="定义网格">
  <div class="dlg-title"><span>定义网格</span><button aria-label="关闭"><svg width="12" height="12"><path d="m1 1 10 10M11 1 1 11" stroke="#111" stroke-width="1.200"/></svg></button></div>
  <div class="dlg-body">
    <fieldset><legend><label for="hx">水平方向间距(mm)=&gt;间距*个数,间距,间距*个数,间距,...</label></legend><textarea id="hx" class="area act">50,150,250,150</textarea></fieldset>
    <fieldset><legend><label for="vy">垂直方向间距(mm)=&gt;间距*个数,间距,间距*个数,间距,...</label></legend><textarea id="vy" class="area">150,40,40,20,20,40</textarea></fieldset>
    <div class="dlg-btns"><button>确定</button><button>取消</button></div>
  </div>
</section>

<div class="ime-bar">
  <svg class="ime-logo" width="27" height="27" viewBox="0 0 26 26"><use href="#s-logo"/></svg>
  <b>中</b>
  <svg width="14" height="16"><circle cx="4" cy="5" r="2" fill="none" stroke="#1f74c8" stroke-width="1.500"/><path d="M8 9h3v2l-2 3H8l1-2H8z" fill="#1f74c8"/></svg>
  <svg width="17" height="17"><circle cx="8.500" cy="8.500" r="7" fill="none" stroke="#1f74c8" stroke-width="1.600"/><path d="M6 5.500v2M11 5.500v2M4.500 10q4 4.500 8 0" fill="none" stroke="#1f74c8" stroke-width="1.500"/></svg>
  <svg width="14" height="17"><rect x="4.500" y="1" width="5" height="9" rx="2.500" fill="#1f74c8"/><path d="M1.500 7q0 6 5.500 6t5.500-6M7 13v3M4 15.500h6" fill="none" stroke="#1f74c8" stroke-width="1.500"/></svg>
  <svg width="17" height="14"><rect x="1" y="1" width="15" height="12" rx="1" fill="#1f74c8"/><path d="M3 4.500h11M3 7.500h11M5 10.500h7" stroke="#fff" stroke-width="1.500" stroke-dasharray="2 1"/></svg>
  <svg width="18" height="16"><circle cx="7" cy="4" r="3" fill="#b6c2d6"/><path d="M1 14q0-7 6-7 4 0 5 3v4z" fill="#b6c2d6"/><path d="M7 10.500h3v2H7v2.500h4M12.500 10v3h4M16.500 10v5" stroke="#8f9fba" fill="none" stroke-width="1.300"/></svg>
  <svg width="16" height="16"><path d="m1 4 4-3q3 2 6 0l4 3-2 4-1.500-1v8h-7V7L3 8z" fill="#1f74c8"/></svg>
  <svg width="16" height="16"><path d="M1 13 7 7q0-5 6-6l-2.500 3L12 6l3-2q0 6-6 6l-6 5q-2 0-2-2z" fill="#1f74c8"/></svg>
</div>
<i class="bubble"></i>

<svg class="marker" viewBox="0 0 204 92"><ellipse cx="102" cy="46" rx="97" ry="41" fill="none" stroke="red" stroke-width="7"/></svg>
</body>
</html>
```

FILE: styles.css
```css
* { box-sizing: border-box; }
html, body { height: 100%; }
body {
  margin: 0; display: flex; flex-direction: column; overflow: hidden; position: relative;
  background: #f0f0f0; color: #000;
  font: 12px/16px "Open Sans", "Noto Sans CJK SC", sans-serif;
}
button, input, select, textarea { font: inherit; color: inherit; border: 0; padding: 0; margin: 0; background: none; border-radius: 0; }
ul { list-style: none; margin: 0; padding: 0; }
i { font-style: normal; }
.defs { position: absolute; width: 0; height: 0; }
svg { flex: none; display: block; }
.ic { width: 16px; height: 16px; }
.half { font-family: "Liberation Mono", monospace; font-size: 10px; }

.title { flex: none; height: 23px; background: #fff; display: flex; align-items: center; gap: 5px; padding: 0 18px 0 2px; }
.title h1 { margin: 0; flex: 1; font-size: 12px; font-weight: 400; color: #888; white-space: nowrap; }
.title h1 span { font-size: 13px; }
.winbtns { display: flex; gap: 34px; }

.menu { flex: none; height: 31px; display: flex; align-items: center; padding-left: 7px; white-space: nowrap; }
.menu-items { display: flex; justify-content: space-between; width: 764px; margin-right: 16px; }
.menu > .tool { margin-right: 7px; }
.hint { height: 27px; width: 188px; line-height: 27px; text-align: center; color: #0b6b6b; background: linear-gradient(#f4f4f4, #f9f9f9); border-radius: 3px; }
.account { flex: 1; height: 27px; margin-left: 1px; padding: 0 5px 0 4px; display: flex; align-items: center; gap: 10px; background: linear-gradient(#f4f4f4, #f9f9f9); border-radius: 3px; }

.tool { display: flex; align-items: center; gap: 4px; white-space: nowrap; flex: none; }
.tool:disabled { color: #7c7c7c; }
.arr { margin-left: 2px; border: 3px solid transparent; border-top-color: currentColor; border-bottom: 0; }
.arr.near { margin-left: -1px; }
.sep { width: 1px; height: 20px; background: #b9b9b9; margin-right: -2px; flex: none; }
.more { margin-left: auto; align-self: flex-start; font: 700 14px/10px "Open Sans", sans-serif; }
.bar { display: flex; align-items: center; gap: 7px; background: linear-gradient(#fdfdfd, #f0f0f0); border-radius: 3px; }
.bars { flex: none; height: 30px; display: flex; gap: 3px; padding-left: 1px; }
.file-bar { width: 149px; padding: 0 1px 0 4px; }
.draw-bar { width: 547px; padding: 0 1px 0 3px; }
.view-bar { flex: 1; padding: 0 5px 0 2px; }
.dim-pick { width: 62px; height: 23px; margin-right: -4px; border: 1px solid #777; display: flex; align-items: center; gap: 4px; padding-left: 1px; }
select {
  appearance: none; opacity: 1; flex: 1; min-width: 0;
  background:
    linear-gradient(#333, #333) no-repeat right 4px top 50% / 5px 1px,
    linear-gradient(#333, #333) no-repeat right 5px top calc(50% + 1px) / 3px 1px,
    linear-gradient(#333, #333) no-repeat right 6px top calc(50% + 2px) / 1px 1px;
}
.dim-pick select { color: #777; }
.floor { display: flex; align-items: center; gap: 5px; margin-left: -4px; }
.floor select { width: 62px; height: 22px; margin-right: -3px; padding-left: 2px; background-color: #fff; }

.work { flex: 1; min-height: 0; display: flex; gap: 5px; position: relative; }
.nav { width: 212px; display: flex; flex-direction: column; gap: 1px; flex: none; }
.nav-head { height: 15px; border: 1px solid #8b8b8b; display: flex; align-items: center; justify-content: space-between; padding-right: 3px; font-size: 13px; flex: none; }
.nav-head span { margin-left: -1px; }
.slat { height: 22px; border: 1px solid #a0a0a0; border-top-color: #c8c8c8; background: #f0f0f0; flex: none; padding-top: 1px; }
.nav-tools { height: 26px; padding: 6px; background: linear-gradient(#f7f7f7, #e9e9e9); flex: none; }
.tree-box { flex: 1; min-height: 0; overflow: hidden; margin-left: 2px; border: 1px solid #7b8491; background: #fff; display: flex; padding: 0 1px 1px 0; }
.tree { flex: 1; overflow: hidden; }
.leaf, .node { height: 16px; display: flex; align-items: center; white-space: nowrap; position: relative; }
.leaf { padding-left: 42px; }
.leaf .ic { margin-right: 4px; }
.leaf::before { content: ""; position: absolute; left: 12px; top: 0; width: 20px; height: 16px; border: dotted #888; border-width: 0 1px; }
.leaf::after { content: ""; position: absolute; left: 32px; top: 8px; width: 9px; border-top: 1px dotted #888; }
.last .leaf::before { border-left-color: transparent; }
.node { padding-left: 7px; }
.node .ic { margin: 0 4px 0 8px; }
.chev { width: 8px; height: 8px; display: grid; place-items: center; }
.chev::before { content: ""; width: 6px; height: 6px; border: solid #999; border-width: 2px 2px 0 0; transform: rotate(45deg); }
.chev.open::before { border-color: #444; transform: rotate(135deg); }
.picked { display: flex; align-items: center; background: #d9d9d9; }
.scroll { width: 16px; background: #f0f0f0; display: flex; flex-direction: column; align-items: center; justify-content: space-between; flex: none; padding: 6px 0; }
.scroll .thumb { width: 100%; background: #cdcdcd; }
.tip { width: 7px; height: 7px; border: solid #505050; border-width: 2px 0 0 2px; transform: rotate(45deg); margin-top: 3px; }
.tip.dn { transform: rotate(225deg); margin: 0 0 3px; }
.nav-scroll .thumb { height: 397px; }

.desk { flex: 1; min-width: 0; display: flex; flex-direction: column; background: #f0f0f0; margin-right: 5px; }
.object-bar { height: 28px; padding-left: 4px; margin-left: 1px; flex: none; }
.plain { padding-left: 2px; }
.split { flex: 1; min-height: 0; display: flex; }
.parts { width: 186px; display: flex; flex-direction: column; padding: 4px 0 1px 2px; }
.search { height: 25px; display: flex; align-items: center; gap: 6px; }
.search input { width: 157px; height: 24px; border: 1px solid #8a8a8a; background: #fff; padding-left: 2px; }
.search input::placeholder { color: #777; opacity: 1; }
.list { flex: 1; min-height: 0; background: #fff; border: 1px solid #75808c; padding-top: 2px; overflow: hidden; font: 10px/16px "Liberation Mono", monospace; }
.list li { height: 16px; display: flex; align-items: center; gap: 4px; padding-left: 42px; position: relative; }
.list svg { width: 12px; height: 12px; }
.list span { padding: 0 3px; }
.list li::before { content: ""; position: absolute; left: 30px; top: 0; height: 16px; width: 11px; border-left: 1px dotted #888; background: repeating-linear-gradient(90deg, #888 0 1px, transparent 1px 2px) 0 8px / 100% 1px no-repeat; }
.list .on { width: 74px; margin-left: 40px; padding-left: 2px; background: #316ac5; }
.list .on::before { left: -10px; height: 9px; }
.props { flex: 1; display: flex; flex-direction: column; align-items: stretch; background: #fff; }
.prop-tab { width: 64px; height: 20px; align-self: flex-start; margin-left: 2px; border: 1px solid #ccc; background: #fff; }
.prop-body { flex: 1; min-height: 0; border: 1px solid #aaa; margin: 4px 0 2px; display: flex; justify-content: flex-end; }
.prop-body .thumb { height: 384px; margin-bottom: 64px; margin-top: 24px; }

.editor { position: absolute; left: 368px; top: 48px; right: 22px; bottom: 2px; border: 1px solid #555; background: #d7e3f1; padding: 0 8px 7px; display: flex; flex-direction: column; box-shadow: inset 1px 1px 0 #fff; }
.editor-title { height: 29px; margin: 1px -7px 0; padding: 11px 0 0 7px; line-height: 16px; color: #8b98a5; background: linear-gradient(#bccbd9, #d7e3f1); flex: none; }
.editor-main { flex: 1; min-height: 0; background: #f0f0f0; display: flex; flex-direction: column; }
.tabs { height: 21px; display: flex; align-items: flex-end; flex: none; }
.tabs button { height: 19px; width: 38px; padding: 0 3px; text-align: left; border: 1px solid #d9d9d9; }
.tabs .cur { height: 21px; width: 45px; background: #fff; border-bottom: 0; padding: 0 6px 2px; }
.page { flex: 1; min-height: 0; border: 1px solid #d9d9d9; border-width: 1px 2px 1px 1px; background: #fff; padding: 2px 1px 2px 2px; display: flex; flex-direction: column; margin-bottom: 3px; }
.inner { height: 28px; padding-left: 4px; flex: none; }
.grip { width: 2px; height: 15px; margin-right: -2px; background: repeating-linear-gradient(#aaa 0 2px, transparent 2px 4px); }
.modes { display: flex; gap: 9px; height: 20px; align-items: center; padding-right: 11px; background: #f0f0f0; margin: 0 -4px 0 -3px; }
.modes label { display: flex; align-items: center; gap: 7px; }
.modes input { appearance: none; width: 12px; height: 12px; border: 1px solid #777; border-radius: 50%; background: #fff; }
.modes input:checked { background: radial-gradient(#222 0 3px, #fff 4px); }
.num { display: flex; align-items: center; gap: 6px; margin-left: -3px; font: 11px/16px "DejaVu Sans", sans-serif; }
.spin { width: 79px; height: 23px; border: 1px solid #777; display: flex; align-items: center; padding-right: 3px; font-size: 12px; }
.spin input { width: 100%; min-width: 0; text-align: right; color: #777; padding-right: 8px; }
.spin i { width: 7px; height: 17px; flex: none; background: linear-gradient(#666, #666) 50% 3px / 5px 1px no-repeat, linear-gradient(#666, #666) 50% 2px / 3px 1px no-repeat, linear-gradient(#666, #666) 50% 13px / 5px 1px no-repeat, linear-gradient(#666, #666) 50% 14px / 3px 1px no-repeat; }
.num + .num { margin-left: 5px; }
.canvas { flex: 1; min-height: 0; background: #000; }
.canvas svg { width: 100%; height: 100%; }
.aux { stroke: #008000; fill: none; }
.mesh { stroke: #c0c0c0; fill: none; }
.dimline { stroke: #fff; stroke-width: 2; fill: none; }
.shape { stroke: #f00; stroke-width: 3; fill: none; }
.dimtext { fill: #0f0; font: 15px "DejaVu Serif", serif; }
.small { fill: #c0c0c0; font: 12px "Liberation Mono", monospace; }
.page-foot { height: 27px; background: #f0f0f0; padding: 2px; flex: none; }
.page-foot button { width: 58px; height: 23px; border: 1px solid #0078d7; background: #e0ecf7; }
.editor-status { height: 22px; display: flex; gap: 2px; flex: none; position: relative; white-space: nowrap; background: #fff; }
.editor-status div { border: 1px solid #d5d5d5; line-height: 20px; background: linear-gradient(#fefefe, #f0f0f0); }
.editor-status .xy { width: 98px; }
.xy span { font-size: 11px; }
.editor-status .msg { flex: 1; }
.editor-status svg { position: absolute; right: 2px; bottom: 1px; }

.status { flex: none; height: 23px; display: flex; gap: 2px; padding-top: 2px; background: #fff; white-space: nowrap; }
.status > span { border: 1px solid #d5d5d5; background: linear-gradient(#fefefe, #f0f0f0); line-height: 19px; padding-left: 1px; }
.s1 { width: 148px; }
.s2 { width: 78px; }
.s3 { width: 98px; }
.s4 { width: 48px; }
.s5 { flex: 1; }
.s6 { width: 70px; }

.taskbar { flex: none; height: 40px; display: flex; background: #010a0e; color: #fff; }
.start { width: 48px; display: grid; place-items: center; background: #000; flex: none; }
.cortana { width: 344px; background: #333; display: flex; align-items: center; gap: 5px; padding: 0 14px 0 9px; flex: none; font-size: 14px; }
.cortana input { flex: 1; min-width: 0; }
.cortana input::placeholder { color: #999; opacity: 1; }
.apps { display: flex; gap: 2px; flex: none; }
.apps button { width: 48px; display: grid; place-items: center; color: #3fa3e8; }
.apps .pale { color: #e9e9e9; }
.apps .run { border-bottom: 2px solid #76b9ed; }
.apps .now { background: #33393c; }
.tray { margin-left: auto; display: flex; align-items: center; gap: 8px; padding-right: 24px; white-space: nowrap; }
.links { color: #ccc; margin-right: 12px; }
.cpu { text-align: center; margin-right: 11px; }
.ime { padding: 0 6px; }
.clock { text-align: center; margin: 0 10px 0 6px; }

.dialog { position: absolute; left: 163px; top: 262px; width: 411px; border: 1px solid #2f85dd; background: #f0f0f0; box-shadow: 0 4px 16px rgba(0, 0, 0, .35); }
.dlg-title { height: 25px; background: #fff; display: flex; justify-content: space-between; align-items: center; padding: 0 9px 0 3px; }
.dlg-body { padding: 15px 14px 8px 13px; display: flex; flex-direction: column; gap: 8px; }
fieldset { margin: 0; padding: 0 9px 6px 7px; border: 1px solid #dcdcdc; min-width: 0; height: 65px; }
legend { padding: 0 4px 0 0; line-height: 16px; height: 16px; font-family: "DejaVu Sans", "Noto Sans CJK SC", sans-serif; white-space: nowrap; }
.area { display: block; width: 100%; height: 41px; border: 1px solid #777; background: #fff; padding: 1px 2px; font: 10px/14px "Liberation Mono", monospace; resize: none; outline: 0; overflow: hidden; }
.area.act { border-color: #557e9f; color: #fff; background: linear-gradient(#0078d7, #0078d7) 2px 2px / 85px 13px no-repeat #fff; }
.dlg-btns { display: flex; justify-content: flex-end; gap: 15px; padding-top: 4px; }
.dlg-btns button { width: 72px; height: 23px; border: 1px solid #adadad; background: #e1e1e1; }

.ime-bar { position: absolute; left: 970px; top: 3px; width: 205px; height: 24px; background: #fff; border: 1px solid #a9bdd6; display: flex; align-items: center; gap: 6px; padding: 0 4px 0 30px; }
.ime-bar b { color: #1f74c8; font-size: 15px; }
.ime-logo { position: absolute; left: -3px; top: -4px; }
.bubble { position: absolute; left: 988px; top: 0; width: 30px; height: 3px; background: #3fc45a; border-radius: 0 0 14px 14px; }
.marker { position: absolute; left: 313px; top: 146px; width: 204px; height: 92px; pointer-events: none; }
```
